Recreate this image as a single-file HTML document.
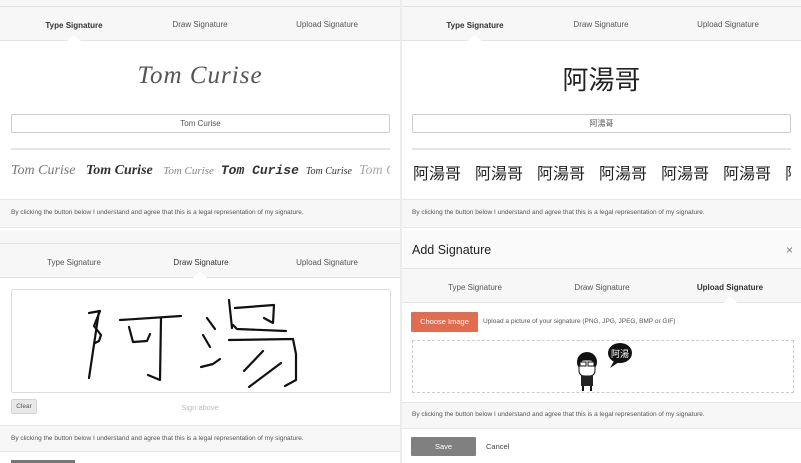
<!DOCTYPE html>
<html><head><meta charset="utf-8"><style>
*{margin:0;padding:0;box-sizing:border-box}
body{width:801px;height:463px;position:relative;background:#fff;font-family:"Liberation Sans","Noto Sans CJK TC",sans-serif;overflow:hidden;color:#444}
.a{position:absolute}
.g{background:#f7f7f7}
.t{font-size:8px;color:#555;position:absolute;text-align:center}
.b{font-weight:bold;color:#333}
.line{position:absolute;height:1px;background:#e3e3e3}
.ft{font-size:6.5px;color:#555;position:absolute}
.caret{position:absolute;width:0;height:0;border-left:7px solid transparent;border-right:7px solid transparent;border-bottom:6px solid #fff}
.cj{font-family:"Noto Sans CJK TC","WenQuanYi Zen Hei",sans-serif;color:#222}
.sg span{display:inline-block;margin-right:14px}
</style></head><body>
<div class="a" style="left:400px;top:0;width:2px;height:463px;background:#ececec"></div>

<!-- TOP LEFT -->
<div class="a g" style="left:0;top:0;width:400px;height:41px"></div>
<div class="line" style="left:0;top:6px;width:400px"></div>
<div class="line" style="left:0;top:40px;width:400px"></div>
<div class="caret" style="left:67px;top:35px"></div>
<div class="t b" style="left:24px;top:21px;width:100px">Type Signature</div>
<div class="t" style="left:150px;top:20px;width:100px">Draw Signature</div>
<div class="t" style="left:277px;top:20px;width:100px">Upload Signature</div>
<div class="a" style="left:0;top:62px;width:400px;text-align:center;font:italic 25px 'Liberation Serif',serif;color:#555;letter-spacing:1px">Tom Curise</div>
<div class="a" style="left:11px;top:114px;width:379px;height:19px;border:1px solid #ccc;border-radius:2px;font-size:8px;text-align:center;line-height:17px;color:#555">Tom Curise</div>
<div class="line" style="left:11px;top:148px;width:379px;height:2px;background:#e6e6e6"></div>
<div class="a" style="left:11px;top:163px;width:379px;white-space:nowrap;overflow:hidden;font:italic 14px 'Liberation Serif',serif;color:#333">
<span style="color:#777">Tom Curise</span>&nbsp;&nbsp; <b>Tom Curise</b>&nbsp;&nbsp; <span style="font-size:11px;color:#888">Tom Curise</span>&nbsp; <span style="font-family:'Liberation Mono';font-weight:bold;font-size:13px">Tom Curise</span>&nbsp; <span style="font-size:10px">Tom Curise</span>&nbsp; <span style="color:#aaa">Tom Curise</span></div>
<div class="a g" style="left:0;top:199px;width:400px;height:29px;border-top:1px solid #e8e8e8;border-bottom:1px solid #e8e8e8"></div>
<div class="ft" style="left:11px;top:209px">By clicking the button below I understand and agree that this is a legal representation of my signature.</div>

<!-- TOP RIGHT -->
<div class="a g" style="left:402px;top:0;width:399px;height:41px"></div>
<div class="line" style="left:402px;top:6px;width:399px"></div>
<div class="line" style="left:402px;top:40px;width:399px"></div>
<div class="caret" style="left:468px;top:35px"></div>
<div class="t b" style="left:425px;top:21px;width:100px">Type Signature</div>
<div class="t" style="left:551px;top:20px;width:100px">Draw Signature</div>
<div class="t" style="left:678px;top:20px;width:100px">Upload Signature</div>
<div class="a cj" style="left:402px;top:63px;width:399px;text-align:center;font-size:26px;line-height:32px">阿湯哥</div>
<div class="a" style="left:412px;top:114px;width:379px;height:19px;border:1px solid #ccc;border-radius:2px;font-size:8px;text-align:center;line-height:17px;color:#555">阿湯哥</div>
<div class="line" style="left:412px;top:148px;width:379px;height:2px;background:#e6e6e6"></div>
<div class="a cj sg" style="left:413px;top:161px;width:378px;white-space:nowrap;overflow:hidden;font-size:16px;line-height:22px"><span>阿湯哥</span><span>阿湯哥</span><span>阿湯哥</span><span>阿湯哥</span><span>阿湯哥</span><span>阿湯哥</span><span>阿湯哥</span></div>
<div class="a g" style="left:402px;top:199px;width:399px;height:29px;border-top:1px solid #e8e8e8;border-bottom:1px solid #e8e8e8"></div>
<div class="ft" style="left:412px;top:209px">By clicking the button below I understand and agree that this is a legal representation of my signature.</div>

<!-- BOTTOM LEFT -->
<div class="a g" style="left:0;top:230px;width:400px;height:48px"></div>
<div class="line" style="left:0;top:243px;width:400px"></div>
<div class="line" style="left:0;top:277px;width:400px"></div>
<div class="caret" style="left:193px;top:272px"></div>
<div class="t" style="left:24px;top:258px;width:100px">Type Signature</div>
<div class="t" style="left:151px;top:258px;width:100px;color:#333">Draw Signature</div>
<div class="t" style="left:277px;top:258px;width:100px">Upload Signature</div>
<div class="a" style="left:11px;top:289px;width:380px;height:104px;border:1px solid #ddd;border-radius:2px"></div>
<svg class="a" style="left:0;top:230px" width="400" height="233" fill="none" stroke="#111" stroke-width="2.2" stroke-linecap="round" stroke-linejoin="round">
<path d="M89 83 L100 81 L94 96 L101 105 L99 111 L95 113"/>
<path d="M99 81 L89 148"/>
<path d="M120 90 L181 86"/>
<path d="M129 97 L133 112 L147 111 L150 104"/>
<path d="M161 88 L160 150 L148 145"/>
<path d="M229 70 L232 98"/>
<path d="M235 78 L274 75 L273 93 L264 88"/>
<path d="M207 88 L215 99"/>
<path d="M203 105 L210 117"/>
<path d="M201 137 L213 134 L220 129"/>
<path d="M233 95 L237 99 L286 101"/>
<path d="M229 110 L293 109 L296 124 L296 150 L285 156"/>
<path d="M263 121 L244 141"/>
<path d="M281 133 L249 157"/>
</svg>
<div class="a" style="left:11px;top:399px;width:26px;height:15px;background:#e8e8e8;border:1px solid #d5d5d5;border-radius:2px;font-size:6.5px;text-align:center;line-height:13px;color:#555">Clear</div>
<div class="a" style="left:150px;top:403px;width:100px;text-align:center;font-size:7.5px;color:#bbb">Sign above</div>
<div class="a g" style="left:0;top:425px;width:400px;height:27px;border-top:1px solid #e8e8e8;border-bottom:1px solid #e8e8e8"></div>
<div class="ft" style="left:11px;top:435px">By clicking the button below I understand and agree that this is a legal representation of my signature.</div>
<div class="a" style="left:11px;top:460px;width:64px;height:3px;background:#777"></div>

<!-- BOTTOM RIGHT -->
<div class="a" style="left:402px;top:230px;width:399px;height:38px;background:#fafafa"></div>
<div class="a" style="left:412px;top:243px;font-size:12.5px;color:#222">Add Signature</div>
<div class="a" style="left:786px;top:243px;font-size:12px;color:#777">×</div>
<div class="a g" style="left:402px;top:268px;width:399px;height:35px;border-top:1px solid #e6e6e6;border-bottom:1px solid #e3e3e3"></div>
<div class="caret" style="left:723px;top:297px"></div>
<div class="t" style="left:425px;top:283px;width:100px">Type Signature</div>
<div class="t" style="left:552px;top:283px;width:100px">Draw Signature</div>
<div class="t b" style="left:680px;top:283px;width:100px">Upload Signature</div>
<div class="a" style="left:411px;top:312px;width:67px;height:20px;background:#e06c52;color:#fff;font-size:7.5px;text-align:center;line-height:20px;border-radius:1px">Choose Image</div>
<div class="a" style="left:483px;top:318px;font-size:6.5px;color:#555">Upload a picture of your signature (PNG, JPG, JPEG, BMP or GIF)</div>
<div class="a" style="left:412px;top:340px;width:382px;height:53px;border:1px dashed #ccc"></div>
<svg class="a" style="left:570px;top:340px" width="65" height="55">
<circle cx="17" cy="22" r="10" fill="#111"/>
<rect x="9" y="20" width="16" height="16" rx="5" fill="#fff" stroke="#111"/>
<rect x="10" y="22" width="6" height="4" fill="none" stroke="#111"/><rect x="18" y="22" width="6" height="4" fill="none" stroke="#111"/>
<rect x="11" y="36" width="12" height="10" fill="#222"/>
<path d="M13 46 v5 M21 46 v5" stroke="#111" stroke-width="2"/>
<ellipse cx="50" cy="13" rx="12" ry="10" fill="#111"/>
<path d="M44 21 L40 28 L49 22z" fill="#111"/>
<text x="41" y="17" font-size="9" fill="#fff" font-family="Noto Sans CJK TC">阿湯</text>
</svg>
<div class="a g" style="left:402px;top:402px;width:399px;height:27px;border-top:1px solid #e8e8e8;border-bottom:1px solid #e8e8e8"></div>
<div class="ft" style="left:412px;top:411px">By clicking the button below I understand and agree that this is a legal representation of my signature.</div>
<div class="a" style="left:411px;top:437px;width:65px;height:19px;background:#808080;color:#fff;font-size:7.5px;text-align:center;line-height:19px;border-radius:1px">Save</div>
<div class="a" style="left:486px;top:442px;font-size:7.5px;color:#444">Cancel</div>
</body></html>
